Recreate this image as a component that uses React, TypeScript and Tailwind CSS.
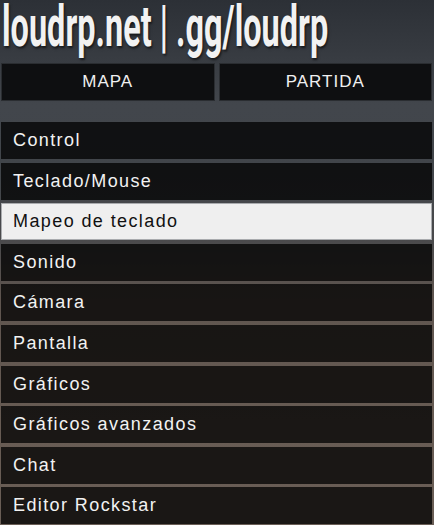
import React from "react";

const items = [
  "Control",
  "Teclado/Mouse",
  "Mapeo de teclado",
  "Sonido",
  "Cámara",
  "Pantalla",
  "Gráficos",
  "Gráficos avanzados",
  "Chat",
  "Editor Rockstar",
];

export default function App() {
  return (
    <div className="w-[434px] h-[525px] overflow-hidden flex flex-col pl-[1px] pr-[2px] bg-[linear-gradient(180deg,#2c3036_0px,#363a40_50px,#42464c_105px,#41454a_170px,#4a4a4c_240px,#5f554f_300px,#675b53_420px,#6a5e56_525px)] font-['Liberation_Sans',Arial,sans-serif]">
      <div className="h-[63px] flex items-start">
        <span className="inline-block origin-left scale-x-[0.56] whitespace-nowrap text-[58px] leading-[58px] font-bold text-[#f2f2f2] -mt-[3px] ml-[1px] font-['Roboto','Liberation_Sans',sans-serif] [text-shadow:2px_2px_3px_rgba(0,0,0,0.6)]">
          loudrp.net | .gg/loudrp
        </span>
      </div>
      <div className="flex gap-[4px] h-[38px]">
        {["MAPA", "PARTIDA"].map((t) => (
          <div
            key={t}
            className="flex-1 flex items-center justify-center bg-[#0e0f11] border border-[#2a2d31] text-[#f0f0f0] text-[17px] tracking-[1px]"
          >
            {t}
          </div>
        ))}
      </div>
      <div className="mt-[21px] flex flex-col gap-[3.6px]">
        {items.map((t) =>
          t === "Mapeo de teclado" ? (
            <div
              key={t}
              className="h-[37px] flex items-center pl-[11px] text-[18px] tracking-[1.4px] bg-[#efefef] text-[#111111] border border-[#a9abae]"
            >
              {t}
            </div>
          ) : (
            <div
              key={t}
              className="h-[37px] flex items-center pl-[12px] text-[18px] tracking-[1.4px] bg-black/75 text-[#f2f2f2]"
            >
              {t}
            </div>
          )
        )}
      </div>
    </div>
  );
}
